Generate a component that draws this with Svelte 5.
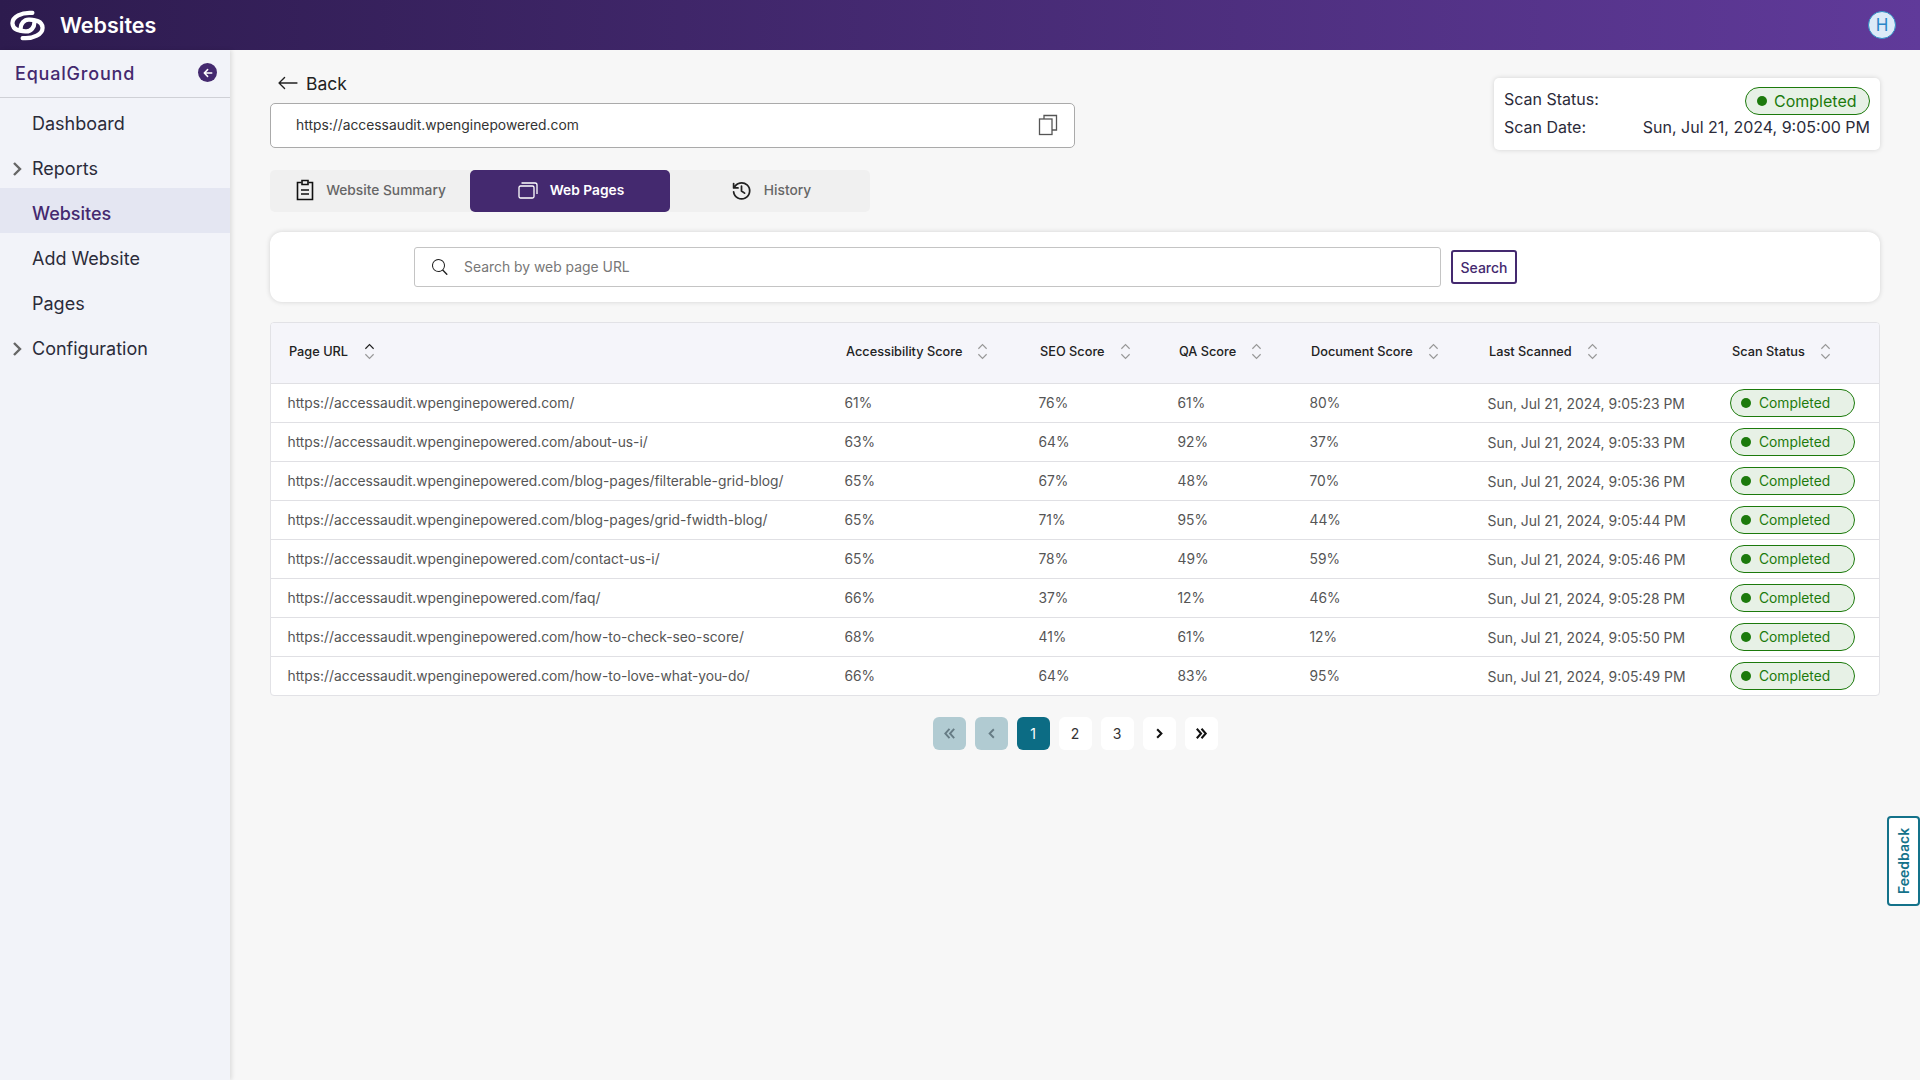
<script lang="ts">
	const pages = [
		['https://accessaudit.wpenginepowered.com/', '61%', '76%', '61%', '80%', 'Sun, Jul 21, 2024, 9:05:23 PM'],
		['https://accessaudit.wpenginepowered.com/about-us-i/', '63%', '64%', '92%', '37%', 'Sun, Jul 21, 2024, 9:05:33 PM'],
		['https://accessaudit.wpenginepowered.com/blog-pages/filterable-grid-blog/', '65%', '67%', '48%', '70%', 'Sun, Jul 21, 2024, 9:05:36 PM'],
		['https://accessaudit.wpenginepowered.com/blog-pages/grid-fwidth-blog/', '65%', '71%', '95%', '44%', 'Sun, Jul 21, 2024, 9:05:44 PM'],
		['https://accessaudit.wpenginepowered.com/contact-us-i/', '65%', '78%', '49%', '59%', 'Sun, Jul 21, 2024, 9:05:46 PM'],
		['https://accessaudit.wpenginepowered.com/faq/', '66%', '37%', '12%', '46%', 'Sun, Jul 21, 2024, 9:05:28 PM'],
		['https://accessaudit.wpenginepowered.com/how-to-check-seo-score/', '68%', '41%', '61%', '12%', 'Sun, Jul 21, 2024, 9:05:50 PM'],
		['https://accessaudit.wpenginepowered.com/how-to-love-what-you-do/', '66%', '64%', '83%', '95%', 'Sun, Jul 21, 2024, 9:05:49 PM']
	];
	const columns = [
		{ label: 'Page URL', width: 557, gap: 16, active: true },
		{ label: 'Accessibility Score', width: 194, gap: 15 },
		{ label: 'SEO Score', width: 139, gap: 15 },
		{ label: 'QA Score', width: 132, gap: 15 },
		{ label: 'Document Score', width: 178, gap: 15 },
		{ label: 'Last Scanned', width: 243, gap: 15 },
		{ label: 'Scan Status', width: 167, gap: 15 }
	];
	const nav = [
		{ label: 'Dashboard' },
		{ label: 'Reports', arrow: true },
		{ label: 'Websites', active: true },
		{ label: 'Add Website' },
		{ label: 'Pages' },
		{ label: 'Configuration', arrow: true }
	];
</script>

<div class="page">
	<header class="topbar">
		<svg class="logo" viewBox="0 0 36 32" fill="none" stroke="#fff" stroke-linecap="round" stroke-width="4.4">
			<path d="M11 21C10 14 15 9.5 20 10C26 10.5 33 11 33.5 18C34 25 24 30 13 29" />
			<path d="M25 11C26 18 21 22.5 16 22C10 21.5 3 21 2.5 14C2 7 12 2 23 3" />
		</svg>
		<span class="title">Websites</span>
		<span class="avatar">H</span>
	</header>

	<div class="body">
		<aside class="sidebar">
			<div class="org">
				<span>EqualGround</span>
				<span class="collapse">
					<svg viewBox="0 0 16 16" width="12" height="12" fill="none" stroke="#fff" stroke-width="2" stroke-linecap="round" stroke-linejoin="round">
						<path d="M13 8H3M7.5 3.5L3 8l4.5 4.5" />
					</svg>
				</span>
			</div>
			<nav>
				{#each nav as item}
					<div class="nav-item" class:active={item.active}>
						{#if item.arrow}
							<svg class="nav-arrow" viewBox="0 0 10 16" fill="none" stroke="#666" stroke-width="2.4">
								<path d="M2 2l6 6-6 6" />
							</svg>
						{/if}
						{item.label}
					</div>
				{/each}
			</nav>
		</aside>

		<main class="content">
			<div class="top-row">
				<div class="top-left">
					<div class="back">
						<svg viewBox="0 0 16 16" width="22" height="22" fill="#222">
							<path d="M15 8a.5.5 0 0 0-.5-.5H2.707l3.147-3.146a.5.5 0 1 0-.708-.708l-4 4a.5.5 0 0 0 0 .708l4 4a.5.5 0 0 0 .708-.708L2.707 8.5H14.5A.5.5 0 0 0 15 8z" />
						</svg>
						<span>Back</span>
					</div>
					<div class="url-box">
						<span>https://accessaudit.wpenginepowered.com</span>
						<svg viewBox="0 0 20 22" width="20" height="22" fill="none" stroke="#555" stroke-width="1.3">
							<path d="M6 5V1.5h12.5V16H14" />
							<rect x="1.5" y="5" width="12.5" height="15.5" />
						</svg>
					</div>
				</div>
				<div class="scan-card">
					<div class="scan-row">
						<span>Scan Status:</span>
						<span class="badge big"><i></i>Completed</span>
					</div>
					<div class="scan-row">
						<span>Scan Date:</span>
						<span>Sun, Jul 21, 2024, 9:05:00 PM</span>
					</div>
				</div>
			</div>

			<div class="tabs">
				<div class="tab">
					<svg viewBox="0 0 18 22" width="18" height="22" fill="none" stroke="#111" stroke-width="1.6">
						<path d="M5.5 3.5H1.5v17h15v-17h-4" />
						<path d="M6 1.5h6v4H6zM5 11h8M5 15h8" />
					</svg>
					Website Summary
				</div>
				<div class="tab selected">
					<svg viewBox="0 0 20 17" width="20" height="17" fill="none" stroke="#fff" stroke-width="1.3">
						<rect x="1" y="4" width="15" height="12" rx="1.5" />
						<path d="M3.5 1h13.5a2 2 0 0 1 2 2v9" />
					</svg>
					Web Pages
				</div>
				<div class="tab">
					<svg viewBox="0 0 24 24" width="21" height="21" fill="none" stroke="#222" stroke-width="2" stroke-linecap="round" stroke-linejoin="round">
						<path d="M3 4v5h5M3.6 9A9.2 9.2 0 1 1 3 13.5M12 7v5.5l3.5 2.5" />
					</svg>
					History
				</div>
			</div>

			<div class="search-card">
				<div class="search-input">
					<svg viewBox="0 0 16 16" width="16" height="16" fill="#222">
						<path d="M11.742 10.344a6.5 6.5 0 1 0-1.397 1.398h-.001c.03.04.062.078.098.115l3.85 3.85a.7.7 0 0 0 1-1l-3.85-3.85a1.007 1.007 0 0 0-.115-.1zM12 6.5a5.5 5.5 0 1 1-11 0 5.5 5.5 0 0 1 11 0z" />
					</svg>
					<span>Search by web page URL</span>
				</div>
				<button class="search-btn">Search</button>
			</div>

			<div class="table-wrap">
				<table>
					<colgroup>
						{#each columns as col}
							<col style="width: {col.width}px" />
						{/each}
					</colgroup>
					<thead>
						<tr>
							{#each columns as col}
								<th>
									<span class="th-inner" style="gap: {col.gap}px">
										{col.label}
										<svg viewBox="0 0 12 20" width="11" height="19" fill="none" stroke-width="1.3">
											<path d="M1.5 7L6 2.5 10.5 7" stroke={col.active ? '#222' : '#999'} />
											<path d="M1.5 13L6 17.5 10.5 13" stroke="#999" />
										</svg>
									</span>
								</th>
							{/each}
						</tr>
					</thead>
					<tbody>
						{#each pages as row}
							<tr>
								{#each row as cell, i}
									<td class:date={i === 5}>{cell}</td>
								{/each}
								<td><span class="badge"><i></i>Completed</span></td>
							</tr>
						{/each}
					</tbody>
				</table>
			</div>

			<div class="pager">
				<span class="pg off">
					<svg viewBox="0 0 16 16" width="15" height="15" fill="none" stroke="currentColor" stroke-width="2"><path d="M8 3L3.5 8 8 13M13 3L8.5 8l4.5 5" /></svg>
				</span>
				<span class="pg off">
					<svg viewBox="0 0 16 16" width="15" height="15" fill="none" stroke="currentColor" stroke-width="2"><path d="M10.5 3.5L6 8l4.5 4.5" /></svg>
				</span>
				<span class="pg current">1</span>
				<span class="pg">2</span>
				<span class="pg">3</span>
				<span class="pg dark">
					<svg viewBox="0 0 16 16" width="15" height="15" fill="none" stroke="currentColor" stroke-width="2.2"><path d="M5.5 3.5L10 8l-4.5 4.5" /></svg>
				</span>
				<span class="pg dark">
					<svg viewBox="0 0 16 16" width="15" height="15" fill="none" stroke="currentColor" stroke-width="2.2"><path d="M3 3l4.5 5L3 13M8 3l4.5 5L8 13" /></svg>
				</span>
			</div>
		</main>
	</div>

	<div class="feedback">Feedback</div>
</div>

<style>
	:global(body) {
		margin: 0;
		font-family: Inter, 'Liberation Sans', sans-serif;
		background: #f7f7f7;
	}

	.page {
		height: 1080px;
		display: flex;
		flex-direction: column;
		overflow: hidden;
		position: relative;
	}

	.topbar {
		height: 50px;
		flex: none;
		display: flex;
		align-items: center;
		padding: 0 24px 0 10px;
		background: linear-gradient(90deg, #2d1b4e, #603a9a);
		color: #fff;
	}

	.logo {
		width: 35px;
		height: 31px;
	}

	.title {
		margin-left: 15px;
		font-size: 21.5px;
		font-weight: 600;
		flex: 1;
	}

	.avatar {
		width: 28px;
		height: 28px;
		box-sizing: border-box;
		border: 1px solid #2e8fc4;
		border-radius: 50%;
		background: #dceaf8;
		color: #2a86c8;
		font-size: 17px;
		display: flex;
		align-items: center;
		justify-content: center;
	}

	.body {
		flex: 1;
		display: flex;
		min-height: 0;
	}

	.sidebar {
		width: 230px;
		flex: none;
		background: #f2f3f9;
		box-shadow: 2px 0 4px rgba(0, 0, 0, 0.1);
	}

	.org {
		height: 47px;
		border-bottom: 1px solid #cfd0d6;
		display: flex;
		align-items: center;
		justify-content: space-between;
		padding: 0 13px 0 15px;
		font-size: 18px;
		font-weight: 500;
		letter-spacing: 0.8px;
		color: #44296f;
	}

	.collapse {
		width: 19px;
		height: 19px;
		border-radius: 50%;
		background: #44296f;
		display: flex;
		align-items: center;
		justify-content: center;
		margin-top: -2px;
	}

	.nav-item {
		height: 45px;
		box-sizing: border-box;
		padding: 6px 0 0 32px;
		display: flex;
		align-items: center;
		position: relative;
		font-size: 18px;
		color: #2b2b3a;
	}

	.nav-item.active {
		background: #e4e6f2;
		color: #44296f;
		font-weight: 500;
	}

	.nav-arrow {
		position: absolute;
		left: 12px;
		top: 18px;
		width: 10px;
		height: 16px;
	}

	.content {
		flex: 1;
		padding: 15px 40px 0;
		min-width: 0;
	}

	.top-row {
		display: flex;
		justify-content: space-between;
		align-items: flex-start;
	}

	.top-left {
		width: 805px;
	}

	.back {
		display: flex;
		align-items: center;
		gap: 7px;
		height: 36px;
		margin-bottom: 2px;
		padding-left: 7px;
		font-size: 17.5px;
		color: #222;
	}

	.url-box {
		height: 42px;
		border: 1px solid #aaa;
		border-radius: 5px;
		background: #fff;
		display: flex;
		align-items: center;
		justify-content: space-between;
		padding: 0 16px 1px 25px;
		font-size: 13.85px;
		color: #333;
	}

	.scan-card {
		width: 386px;
		height: 72px;
		margin-top: 13px;
		padding: 7px 10px;
		box-sizing: border-box;
		background: #fff;
		border-radius: 5px;
		box-shadow: 0 0 5px rgba(0, 0, 0, 0.15);
		font-size: 16px;
		color: #2b2b3a;
	}

	.scan-row {
		display: flex;
		justify-content: space-between;
		align-items: center;
		height: 28px;
	}

	.badge {
		display: inline-flex;
		align-items: center;
		box-sizing: border-box;
		width: 125px;
		height: 28px;
		padding-left: 10px;
		gap: 8px;
		border: 1px solid #1c7a0c;
		border-radius: 14px;
		background: #e7f1e6;
		color: #1c7a0c;
		font-size: 13.8px;
	}

	.badge i {
		width: 10px;
		height: 10px;
		border-radius: 50%;
		background: #1c7a0c;
	}

	.badge.big {
		font-size: 16px;
		gap: 7px;
		padding-left: 11px;
		margin-top: 3px;
	}

	.tabs {
		display: flex;
		margin-top: 20px;
		height: 42px;
		width: 600px;
		background: #f0f0f0;
		border-radius: 5px;
	}

	.tab {
		width: 200px;
		display: flex;
		align-items: center;
		justify-content: center;
		gap: 12px;
		padding: 0 0 2px 2px;
		box-sizing: border-box;
		font-size: 13.76px;
		font-weight: 500;
		color: #666;
		border-radius: 5px;
	}

	.tab.selected {
		background: #44296f;
		color: #fff;
		font-weight: 600;
	}

	.search-card {
		margin-top: 20px;
		height: 70px;
		background: #fff;
		border-radius: 12px;
		box-shadow: 0 0 5px rgba(0, 0, 0, 0.15);
		display: flex;
		align-items: center;
		padding-left: 144px;
		gap: 10px;
	}

	.search-input {
		width: 1027px;
		height: 40px;
		box-sizing: border-box;
		border: 1px solid #c4c4c4;
		border-radius: 3px;
		display: flex;
		align-items: center;
		gap: 16px;
		padding-left: 17px;
		font-size: 13.9px;
		color: #777;
	}

	.search-btn {
		width: 66px;
		height: 34px;
		padding: 0;
		background: #fff;
		border: 2px solid #44296f;
		border-radius: 3px;
		color: #44296f;
		font-family: inherit;
		font-size: 14px;
		font-weight: 500;
	}

	.table-wrap {
		margin-top: 20px;
		background: #fff;
		border: 1px solid #e2e2e6;
		border-radius: 4px;
		overflow: hidden;
	}

	table {
		width: 100%;
		table-layout: fixed;
		border-collapse: collapse;
	}

	th {
		height: 57px;
		padding: 0 0 3px 18px;
		background: #f5f5fa;
		border-bottom: 1px solid #e0e0e4;
		text-align: left;
		font-size: 12.75px;
		font-weight: 500;
		color: #222;
	}

	.th-inner {
		display: inline-flex;
		align-items: center;
	}

	td {
		height: 38px;
		padding: 0 0 0 16.5px;
		border-bottom: 1px solid #e0e0e4;
		font-size: 13.8px;
		color: #555;
		white-space: nowrap;
	}

	td.date {
		font-size: 13.95px;
	}

	td:last-child {
		padding-left: 16px;
	}

	tr:last-child td {
		border-bottom: none;
	}

	.pager {
		margin-top: 21px;
		display: flex;
		justify-content: center;
		gap: 9px;
	}

	.pg {
		width: 33px;
		height: 33px;
		border-radius: 6px;
		background: #fff;
		display: flex;
		align-items: center;
		justify-content: center;
		font-size: 14px;
		color: #333;
	}

	.pg.off {
		background: #b1cbd2;
		color: #667c85;
	}

	.pg.current {
		background: #0c6c84;
		color: #fff;
	}

	.pg.dark {
		color: #111;
	}

	.feedback {
		position: absolute;
		right: 0;
		top: 816px;
		width: 33px;
		height: 90px;
		box-sizing: border-box;
		border: 2px solid #14728a;
		border-radius: 4px;
		background: #fff;
		color: #14728a;
		writing-mode: vertical-rl;
		transform: rotate(180deg);
		display: flex;
		align-items: center;
		justify-content: center;
		font-size: 14px;
		font-weight: 600;
	}
</style>
